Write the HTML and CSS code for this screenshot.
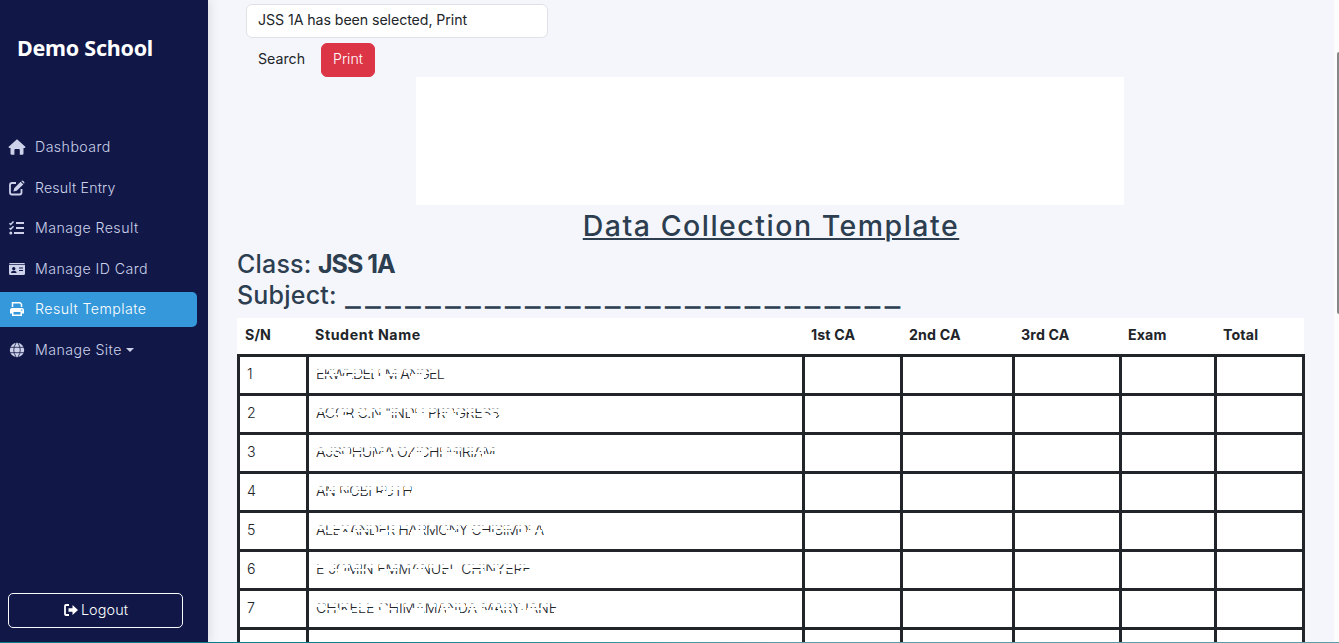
FILE: index.html
```html
<!DOCTYPE html>
<html lang="en">
<head>
<meta charset="utf-8">
<title>Data Collection Template</title>
<link rel="stylesheet" href="styles.css">
</head>
<body>
<div class="app">
  <aside class="sidebar">
    <div class="brand">Demo School</div>
    <nav class="nav">
      <a class="link l1"><svg class="icon" viewBox="0 0 18 16"><path fill="currentColor" d="M9 .3 17.6 8l-.8 1H15.5v5.5q0 1.2-1.2 1.2h-2.5V11q0-1-1-1H7.400q-1 0-1 1v4.700H3.700q-1.200 0-1.200-1.200V9H1.200L.4 8Z"/></svg><span>Dashboard</span></a>
      <a class="link l2"><svg class="icon" viewBox="0 0 18 16"><g fill="none" stroke="currentColor" stroke-width="1.800"><path d="M8 3H4Q2 3 2 5v7.500q0 2 2 2h7.500q2 0 2-2V9"/></g><path fill="currentColor" d="m12.600 1.700 2.700 2.700-6.600 6.400-3.300.8.800-3.300ZM13.300 1q1-1 2 0l.7.7q1 1 0 2Z"/></svg><span>Result Entry</span></a>
      <a class="link l3"><svg class="icon" viewBox="0 0 18 16"><g fill="none" stroke="currentColor"><path stroke-width="1.500" d="m1.500 3.300 1.200 1.200L5.500 1.500M1.500 8l1.200 1.200L5.500 6.300"/><path stroke-width="2" d="M8 3h8M8 8h8M6 13h10"/></g><circle cx="2.800" cy="13" r="1.500" fill="currentColor"/></svg><span>Manage Result</span></a>
      <a class="link l4"><svg class="icon" viewBox="0 0 18 16"><path fill="currentColor" fill-rule="evenodd" d="M1 4h16v8.500Q17 14 15.500 14h-13Q1 14 1 12.500ZM1 3.200Q1 2 2.500 2h13Q17 2 17 3.200ZM5.700 6a1.700 1.700 0 1 0 .1 0ZM3 12h5.600q0-2-1.800-2h-2Q3 10 3 12ZM11 6.500v1h4v-1ZM11 9v1h4V9Z"/></svg><span>Manage ID Card</span></a>
      <a class="link l5 active"><svg class="icon" viewBox="0 0 18 16"><path fill="none" stroke="currentColor" stroke-width="1.500" d="M4.500 6V1.700H12L13.500 3.200V6"/><path fill="currentColor" fill-rule="evenodd" d="M4 7h10q2 0 2 2v3.500h-2V15H4v-2.500H2V9q0-2 2-2ZM5.500 11v2.500h7V11ZM13.200 8.500v1.200h1.200V8.500Z"/></svg><span>Result Template</span></a>
      <a class="link l6"><svg class="icon" viewBox="0 0 18 16"><circle cx="9" cy="8" r="7.200" fill="currentColor"/><path fill="none" stroke="#111848" stroke-width=".8" d="M2 5.300h14M2 10.700h14M8 1Q3.500 8 8 15M10 1q4.500 7 0 14"/></svg><span>Manage Site</span><i class="caret"></i></a>
    </nav>
    <button class="logout"><svg class="exit" viewBox="0 0 16 14"><path fill="none" stroke="currentColor" stroke-width="1.800" d="M6 2H3Q2 2 2 3v8q0 1 1 1h3"/><path fill="currentColor" d="M5.500 5.200h4V2L15 7l-5.500 5V8.800h-4Z"/></svg><span>Logout</span></button>
  </aside>

  <main class="main">
    <div class="search">JSS 1A has been selected, Print</div>
    <div class="actions"><span class="find">Search</span><button class="print">Print</button></div>
    <div class="banner"></div>
    <h2 class="title"><span>Data Collection Template</span></h2>
    <div class="meta"><span class="m1">Class:</span><b>JSS 1A</b></div>
    <div class="meta"><span class="m2">Subject:</span><span class="blank">_ _ _ _ _ _ _ _ _ _ _ _ _ _ _ _ _ _ _ _ _ _ _ _ _ _ _ _</span></div>
    <div class="cols head"><div>S/N</div><div class="wide">Student Name</div><div>1st CA</div><div>2nd CA</div><div>3rd CA</div><div>Exam</div><div>Total</div></div>
    <div class="cols body">
      <div>1</div><div><span class="name n1">EKWEDELLM ANGEL</span></div><div></div><div></div><div></div><div></div><div></div>
      <div>2</div><div><span class="name n2">AGOR C.N "INDU PROGRESS</span></div><div></div><div></div><div></div><div></div><div></div>
      <div>3</div><div><span class="name n3">AJSOHUMA OZICHI MIRIAM</span></div><div></div><div></div><div></div><div></div><div></div>
      <div>4</div><div><span class="name n4">AN NOBI RUTH</span></div><div></div><div></div><div></div><div></div><div></div>
      <div>5</div><div><span class="name n5">ALEXANDER HARMONY CHISIMDI A</span></div><div></div><div></div><div></div><div></div><div></div>
      <div>6</div><div><span class="name n6">E JOMIN EMMANUEL CHINYERE</span></div><div></div><div></div><div></div><div></div><div></div>
      <div>7</div><div><span class="name n7">CHIKELE CHIMAMANDA MARYJANE</span></div><div></div><div></div><div></div><div></div><div></div>
      <div></div><div></div><div></div><div></div><div></div><div></div><div></div>
    </div>
  </main>
  <div class="scroll"><div class="thumb"></div></div>
</div>
<div class="edge"></div>
</body>
</html>
```
FILE: styles.css
```css
* { box-sizing: border-box; }
body { margin: 0; width: 1339px; height: 643px; overflow: hidden; background: #f5f6fb; color: #212529; font: 14.2px/24px Inter, "Open Sans", sans-serif; }
.app { display: flex; height: 643px; }
.sidebar { width: 208px; flex: none; background: #111848; display: flex; flex-direction: column; box-shadow: 2px 0 10px rgba(0,0,0,.1); padding-bottom: 15px; }
.brand { padding: 33px 0 0 17px; height: 130px; font: bold 21.5px/30px "Noto Sans", sans-serif; letter-spacing: -.25px; color: #fff; white-space: nowrap; }
.nav { display: flex; flex-direction: column; gap: 5.5px; }
.link { height: 35px; width: 197px; padding: 0 0 1px 8px; display: flex; align-items: center; color: #cdd2ea; font-weight: 300; letter-spacing: .43px; border-radius: 0 5px 5px 0; white-space: nowrap; }
.link.active { background: #3498db; color: #fff; }
.l2 { letter-spacing: .15px; }
.icon { width: 18px; height: 16px; margin-right: 9px; flex: none; }
.caret { border: 4px solid transparent; border-top-color: currentColor; border-bottom: 0; margin-left: 4px; }
.logout { margin: auto 0 0 8px; width: 175px; height: 35px; border: 1px solid #f8f9fa; border-radius: 5px; background: none; color: #fff; font: 300 14.4px/24px Inter, sans-serif; letter-spacing: .1px; display: flex; align-items: center; justify-content: center; gap: 2px; padding: 0 0 2px; }
.exit { width: 16px; height: 14px; }
.main { flex: 1; padding: 4px 0 0 29px; overflow: hidden; }
.search { margin-left: 9px; width: 302px; height: 34px; border: 1px solid #dee2e6; border-radius: 6px; background: #fff; padding: 3px 11px; letter-spacing: -.08px; white-space: nowrap; }
.actions { display: flex; margin: 5px 0 0 21px; height: 34px; align-items: center; }
.find { width: 63px; padding-bottom: 2px; }
.print { width: 54px; height: 34px; border: 1px solid #dc3545; border-radius: 6px; background: #dc3545; color: #fff; font: 300 14.2px/24px Inter, sans-serif; padding: 0 0 2px; }
.banner { width: 708px; height: 128px; margin-left: 179px; background: #fff; }
.title { margin: 0; width: 1068px; height: 43px; text-align: center; font-weight: 500; font-size: 28.5px; line-height: 42px; color: #2c3e50; white-space: nowrap; }
.title span { text-decoration: underline; text-decoration-thickness: 2px; text-underline-offset: 2px; letter-spacing: 1.5px; }
.meta { height: 31.500px; display: flex; color: #2c3e50; font-size: 25px; font-weight: 500; line-height: 32px; white-space: nowrap; }
.meta b { font-weight: 700; letter-spacing: -1px; }
.m1 { width: 81px; letter-spacing: .2px; }
.m2 { width: 109px; letter-spacing: .2px; position: relative; top: -1px; }
.blank { font-family: "Liberation Sans", sans-serif; font-weight: bold; word-spacing: -.87px; -webkit-text-stroke: 1.4px #2c3e50; }
.cols { display: grid; grid-template-columns: 66px 493px 95px 109px 104px 92px 85px; column-gap: 3px; width: 1068px; }
.head { margin-top: 7px; height: 36px; width: 1067px; background: #fff; font-weight: 700; line-height: 34px; letter-spacing: .15px; }
.head div { padding-left: 9px; white-space: nowrap; }
.head div:first-child { padding-left: 8px; }
.head .wide { letter-spacing: .6px; }
.body { background: #212529; padding: 3px; row-gap: 3px; grid-auto-rows: 36px; font-weight: 300; }
.body > div { background: #fff; padding-left: 7px; line-height: 33px; white-space: nowrap; }
.name { position: relative; display: inline-block; line-height: 16px; font-weight: 300; }
.name::after { content: ""; position: absolute; inset: 0; background: repeating-linear-gradient(90deg, #fff 0 9px, transparent 9px 13px, #fff 13px 20px, transparent 20px 25px) 0 4px / 100% 3px no-repeat, repeating-linear-gradient(90deg, transparent 0 8px, #fff 8px 23px, transparent 23px 29px) 0 8px / 100% 2px no-repeat, repeating-linear-gradient(90deg, transparent 0 22px, #fff 22px 36px) 0 10px / 100% 3px no-repeat, linear-gradient(#fff, #fff) 0 2px / 100% 1.500px no-repeat; }
.n1 { letter-spacing: -.7px; }
.n2 { letter-spacing: -.4px; }
.n3 { letter-spacing: -.4px; }
.n4 { letter-spacing: -.45px; }
.n5 { letter-spacing: -.5px; }
.n6 { letter-spacing: -.15px; }
.n7 { letter-spacing: -.05px; }
.scroll { width: 5px; background: #fcfcfd; padding: 52px 0 0 3px; }
.thumb { height: 262px; background: #85878a; border-radius: 2px 0 0 2px; }
.edge { position: absolute; left: 0; top: 642px; width: 1339px; height: 1px; background: linear-gradient(90deg, #087f8c 25%, #5b9fa5 60%); }
```
